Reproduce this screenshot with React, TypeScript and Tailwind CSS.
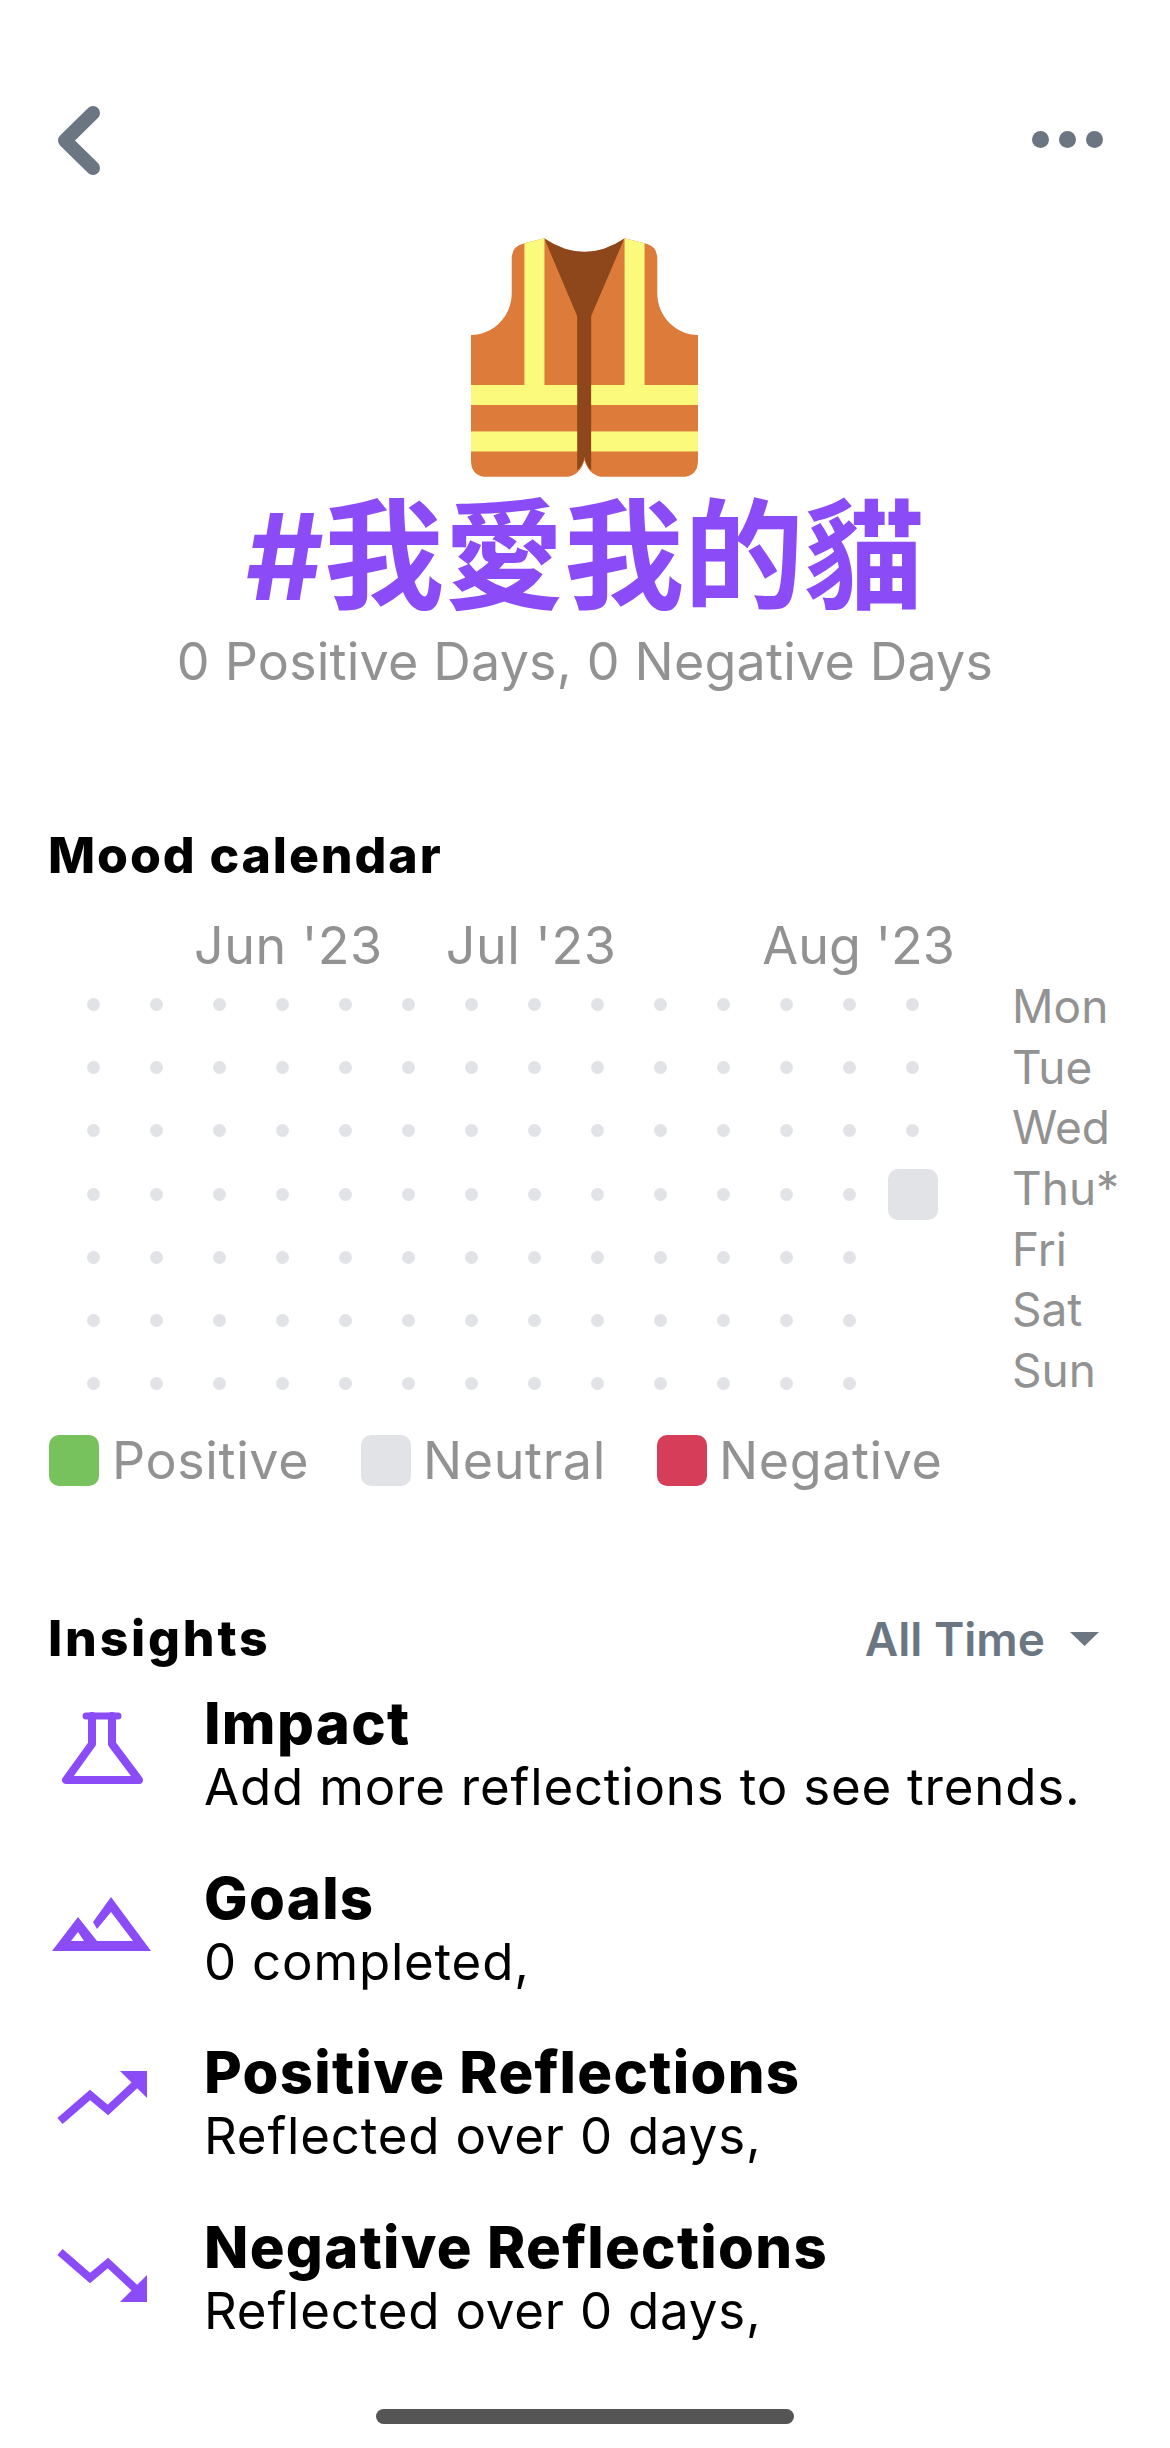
import React from 'react';

const font = { fontFamily: 'Inter, "Noto Sans CJK TC", sans-serif' };

const days = ['Mon', 'Tue', 'Wed', 'Thu*', 'Fri', 'Sat', 'Sun'];

const Vest = () => (
    <svg width="227" height="239" viewBox="155 85 680 715" className="mr-[2px]">
        <path fill="#DC7B3A" d="M315 100 Q277 108 277 145 V250 C277 320 220 375 155 375 V750 Q155 800 205 800 H435 Q480 800 495 750 Q510 800 555 800 H785 Q835 800 835 750 V375 C770 375 713 320 713 250 V145 Q713 108 675 100 L615 85 Q495 170 375 85 Z" />
        <path fill="#8E471A" d="M375 87 Q495 165 614 87 L515 318 V780 Q500 770 495 740 Q490 770 473 780 V318 Z" />
        <path fill="#FCFA7C" d="M315 100 L375 85 V525 H473 V585 H155 V525 H315 Z" />
        <path fill="#FCFA7C" d="M675 100 L615 85 V525 H515 V585 H835 V525 H675 Z" />
        <rect fill="#FCFA7C" x="155" y="664" width="318" height="60" />
        <rect fill="#FCFA7C" x="515" y="664" width="320" height="60" />
    </svg>
);

// icons are drawn in page coordinates, the viewBox just picks the row
const Flask = () => (
    <svg width="110" height="120" viewBox="50 1693 110 120" fill="none" stroke="#8B4CF7" strokeWidth="8" strokeLinejoin="round" strokeLinecap="round">
        <path d="M86 1718 H118" strokeWidth="7" />
        <path d="M92 1718 V1746 L66 1782 H139 L112 1746 V1718" />
    </svg>
);

const Mountain = () => (
    <svg width="110" height="120" viewBox="50 1868 110 120">
        <path fill="#8B4CF7" fillRule="evenodd" d="M52 1953 L78 1919 L97 1943 H133 L111 1914 L97 1931 L93 1924 L111 1899 L151 1953 Z M71 1943 H84 L78 1934 Z" />
    </svg>
);

const TrendUp = () => (
    <svg width="110" height="120" viewBox="50 2042 110 120" fill="none">
        <path d="M60 2123 L90 2097 L108 2112 L138 2084" stroke="#8B4CF7" strokeWidth="8" />
        <path d="M120 2073 H147 V2100 Z" fill="#8B4CF7" />
    </svg>
);

const TrendDown = () => (
    <svg width="110" height="120" viewBox="50 2216 110 120" fill="none">
        <path d="M60 2253 L90 2279 L108 2264 L138 2292" stroke="#8B4CF7" strokeWidth="8" />
        <path d="M120 2303 H147 V2276 Z" fill="#8B4CF7" />
    </svg>
);

const insights = [
    { title: 'Impact', sub: 'Add more reflections to see trends.', icon: <Flask /> },
    { title: 'Goals', sub: '0 completed,', icon: <Mountain /> },
    { title: 'Positive Reflections', sub: 'Reflected over 0 days,', icon: <TrendUp /> },
    { title: 'Negative Reflections', sub: 'Reflected over 0 days,', icon: <TrendDown /> },
];

const App: React.FC = () => {
    return (
        <div className="w-[1170px] h-[2448px] bg-white overflow-hidden flex flex-col" style={font}>
            {/* Top bar */}
            <div className="flex justify-between items-center mt-[106px] h-[69px] pl-[50px] pr-[67px]">
                <svg width="50" height="69" viewBox="50 106 50 69" fill="none" stroke="#6B7682" strokeWidth="14" strokeLinecap="round" strokeLinejoin="round">
                    <path d="M93 113 L65 140.5 L93 168" />
                </svg>
                <div className="flex gap-[10px] mb-[2px]">
                    <div className="w-[17px] h-[17px] rounded-full bg-[#6B7682]"></div>
                    <div className="w-[17px] h-[17px] rounded-full bg-[#6B7682]"></div>
                    <div className="w-[17px] h-[17px] rounded-full bg-[#6B7682]"></div>
                </div>
            </div>

            {/* Tag header */}
            <div className="flex justify-center mt-[63px]"><Vest /></div>
            <div className="h-[120px] mt-[20px] text-center text-[120px] leading-[120px] font-bold text-[#8B4CF7]">#我愛我的貓</div>
            <div className="h-[60px] mt-[15px] text-center text-[52px] leading-[60px] tracking-[0.2px] text-[#929292]">0 Positive Days, 0 Negative Days</div>

            {/* Mood calendar */}
            <div className="h-[60px] mt-[133px] pl-[48px] text-[50px] leading-[60px] font-extrabold tracking-[1.9px] text-black">Mood calendar</div>
            <div className="flex h-[60px] mt-[31px] text-[52px] leading-[60px] text-[#929292]">
                <span className="ml-[194px] tracking-[0.5px]">Jun '23</span>
                <span className="ml-[63px] tracking-[0.5px]">Jul '23</span>
                <span className="ml-[146px]">Aug '23</span>
            </div>
            <div className="flex -mt-[3px]">
                <div className="ml-[62px] grid grid-cols-[repeat(14,63px)] grid-rows-[repeat(7,63.2px)] w-[882px] h-[442.4px]">
                    {Array.from({ length: 14 * 7 }).map((_, i) => {
                        const col = i % 14;
                        const row = Math.floor(i / 14);
                        return (
                            <div key={i} className="flex items-center justify-center">
                                {col === 13 && row === 3 ? (
                                    <div className="w-[50px] h-[51px] rounded-[10px] bg-[#E2E3E7]"></div>
                                ) : col === 13 && row > 3 ? null : (
                                    <div className="w-[13px] h-[13px] rounded-full bg-[#E2E3E7]"></div>
                                )}
                            </div>
                        );
                    })}
                </div>
                <div className="ml-[68px] mt-[3px] flex flex-col">
                    {days.map((d) => (
                        <div key={d} className="h-[60.7px] text-[46px] leading-[60.7px] text-[#929292]">{d}</div>
                    ))}
                </div>
            </div>

            {/* Legend */}
            <div className="flex items-center h-[51px] mt-[20px] pl-[49px] text-[52px] tracking-[0.6px] text-[#929292]">
                <div className="w-[50px] h-[51px] rounded-[10px] bg-[#78C25E]"></div>
                <span className="ml-[13px] w-[249px]">Positive</span>
                <div className="w-[50px] h-[51px] rounded-[10px] bg-[#E2E3E7]"></div>
                <span className="ml-[12px] w-[234px]">Neutral</span>
                <div className="w-[50px] h-[51px] rounded-[10px] bg-[#D63D58]"></div>
                <span className="ml-[12px]">Negative</span>
            </div>

            {/* Insights */}
            <div className="flex justify-between items-center h-[60px] mt-[122px] pl-[48px] pr-[71px]">
                <div className="text-[50px] font-extrabold tracking-[2.8px] text-black">Insights</div>
                <div className="flex items-center gap-[25px] mt-[2px]">
                    <span className="text-[46px] font-semibold text-[#6B7682]">All Time</span>
                    <svg width="29" height="14" viewBox="0 0 29 14"><path d="M0 0 H29 L14.5 14 Z" fill="#6B7682" /></svg>
                </div>
            </div>
            <div className="mt-[23px] flex flex-col pl-[50px]">
                {insights.map((item) => (
                    <div key={item.title} className="flex h-[174.4px]">
                        <div className="w-[154px] shrink-0">{item.icon}</div>
                        <div>
                            <div className="text-[58px] leading-[64px] font-extrabold tracking-[1.3px] text-black">{item.title}</div>
                            <div className="text-[51px] leading-[64px] tracking-[0.8px] text-black">{item.sub}</div>
                        </div>
                    </div>
                ))}
            </div>

            {/* Home indicator */}
            <div className="flex justify-center mt-[20px]">
                <div className="w-[418px] h-[15px] rounded-full bg-[#555555]"></div>
            </div>
        </div>
    );
};

export default App;
